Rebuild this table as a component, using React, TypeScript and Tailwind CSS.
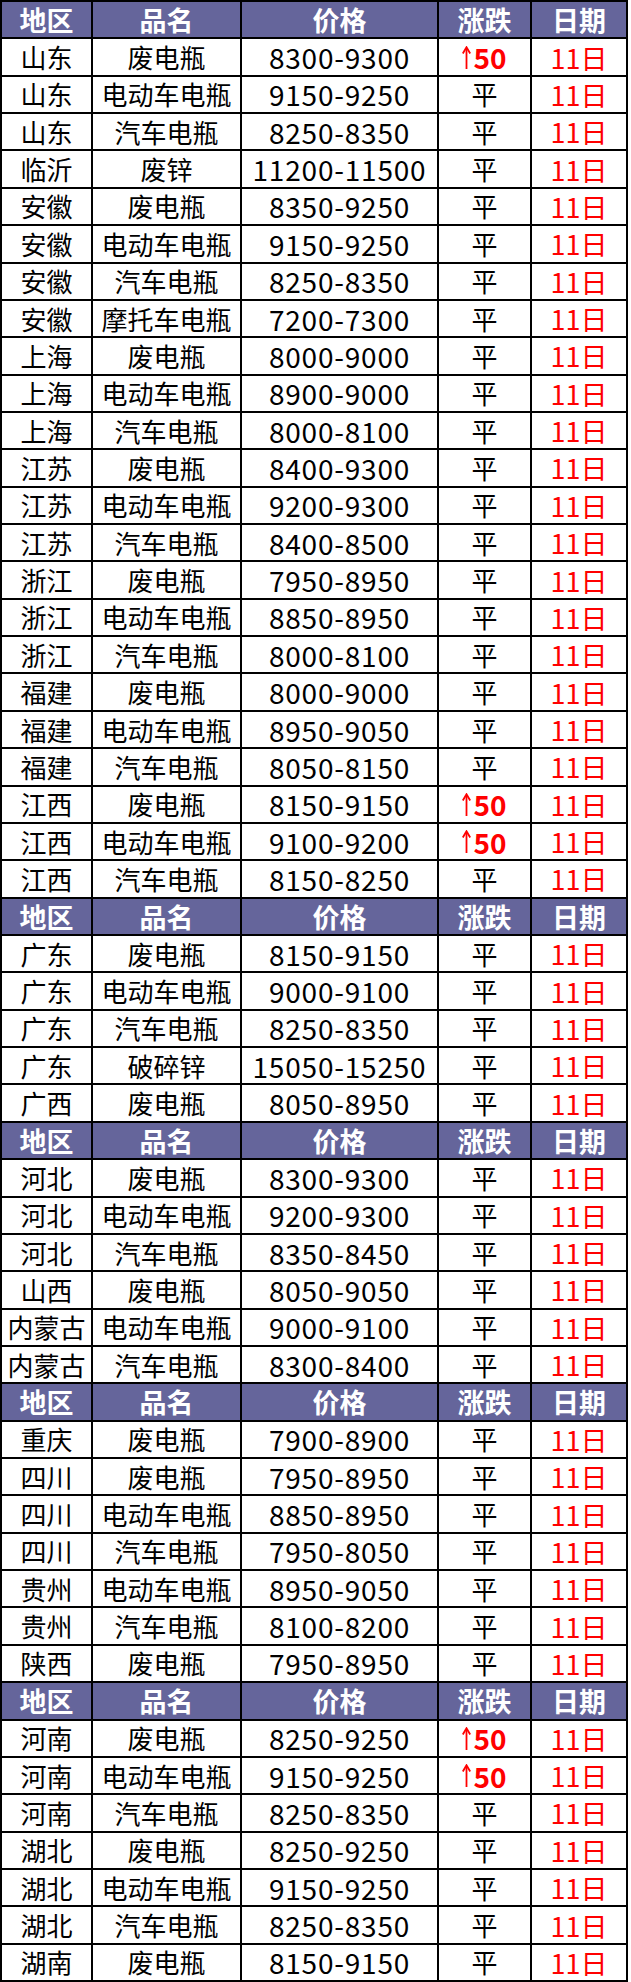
import React from 'react'

type Row = { area: string; name: string; price: string; change: string }

const sections: Row[][] = [
  [
    { area: '山东', name: '废电瓶', price: '8300-9300', change: '50' },
    { area: '山东', name: '电动车电瓶', price: '9150-9250', change: '平' },
    { area: '山东', name: '汽车电瓶', price: '8250-8350', change: '平' },
    { area: '临沂', name: '废锌', price: '11200-11500', change: '平' },
    { area: '安徽', name: '废电瓶', price: '8350-9250', change: '平' },
    { area: '安徽', name: '电动车电瓶', price: '9150-9250', change: '平' },
    { area: '安徽', name: '汽车电瓶', price: '8250-8350', change: '平' },
    { area: '安徽', name: '摩托车电瓶', price: '7200-7300', change: '平' },
    { area: '上海', name: '废电瓶', price: '8000-9000', change: '平' },
    { area: '上海', name: '电动车电瓶', price: '8900-9000', change: '平' },
    { area: '上海', name: '汽车电瓶', price: '8000-8100', change: '平' },
    { area: '江苏', name: '废电瓶', price: '8400-9300', change: '平' },
    { area: '江苏', name: '电动车电瓶', price: '9200-9300', change: '平' },
    { area: '江苏', name: '汽车电瓶', price: '8400-8500', change: '平' },
    { area: '浙江', name: '废电瓶', price: '7950-8950', change: '平' },
    { area: '浙江', name: '电动车电瓶', price: '8850-8950', change: '平' },
    { area: '浙江', name: '汽车电瓶', price: '8000-8100', change: '平' },
    { area: '福建', name: '废电瓶', price: '8000-9000', change: '平' },
    { area: '福建', name: '电动车电瓶', price: '8950-9050', change: '平' },
    { area: '福建', name: '汽车电瓶', price: '8050-8150', change: '平' },
    { area: '江西', name: '废电瓶', price: '8150-9150', change: '50' },
    { area: '江西', name: '电动车电瓶', price: '9100-9200', change: '50' },
    { area: '江西', name: '汽车电瓶', price: '8150-8250', change: '平' },
  ],
  [
    { area: '广东', name: '废电瓶', price: '8150-9150', change: '平' },
    { area: '广东', name: '电动车电瓶', price: '9000-9100', change: '平' },
    { area: '广东', name: '汽车电瓶', price: '8250-8350', change: '平' },
    { area: '广东', name: '破碎锌', price: '15050-15250', change: '平' },
    { area: '广西', name: '废电瓶', price: '8050-8950', change: '平' },
  ],
  [
    { area: '河北', name: '废电瓶', price: '8300-9300', change: '平' },
    { area: '河北', name: '电动车电瓶', price: '9200-9300', change: '平' },
    { area: '河北', name: '汽车电瓶', price: '8350-8450', change: '平' },
    { area: '山西', name: '废电瓶', price: '8050-9050', change: '平' },
    { area: '内蒙古', name: '电动车电瓶', price: '9000-9100', change: '平' },
    { area: '内蒙古', name: '汽车电瓶', price: '8300-8400', change: '平' },
  ],
  [
    { area: '重庆', name: '废电瓶', price: '7900-8900', change: '平' },
    { area: '四川', name: '废电瓶', price: '7950-8950', change: '平' },
    { area: '四川', name: '电动车电瓶', price: '8850-8950', change: '平' },
    { area: '四川', name: '汽车电瓶', price: '7950-8050', change: '平' },
    { area: '贵州', name: '电动车电瓶', price: '8950-9050', change: '平' },
    { area: '贵州', name: '汽车电瓶', price: '8100-8200', change: '平' },
    { area: '陕西', name: '废电瓶', price: '7950-8950', change: '平' },
  ],
  [
    { area: '河南', name: '废电瓶', price: '8250-9250', change: '50' },
    { area: '河南', name: '电动车电瓶', price: '9150-9250', change: '50' },
    { area: '河南', name: '汽车电瓶', price: '8250-8350', change: '平' },
    { area: '湖北', name: '废电瓶', price: '8250-9250', change: '平' },
    { area: '湖北', name: '电动车电瓶', price: '9150-9250', change: '平' },
    { area: '湖北', name: '汽车电瓶', price: '8250-8350', change: '平' },
    { area: '湖南', name: '废电瓶', price: '8150-9150', change: '平' },
  ],
]

// 5 columns: 地区 / 品名 / 价格 / 涨跌 / 日期
const rowCls =
  'grid grid-cols-[91px_149px_197px_93px_96px] h-[37.36px] border-b-2 border-black'
const cell =
  'flex items-center justify-center border-r-2 border-black whitespace-nowrap leading-none'

const UpArrow = () => (
  <svg width="9" height="23" viewBox="0 0 9 23" className="mr-[2px]">
    <path d="M4.5 2.5V23" stroke="#ff0000" strokeWidth="1.8" fill="none" />
    <path d="M0.8 7.5L4.5 1.2L8.2 7.5" stroke="#ff0000" strokeWidth="1.8" fill="none" />
  </svg>
)

const HeaderRow = () => (
  <div className={`${rowCls} bg-[#65659b] text-[27px] text-white font-bold`}>
    <div className={cell}>地区</div>
    <div className={cell}>品名</div>
    <div className={cell}>价格</div>
    <div className={cell}>涨跌</div>
    <div className={cell}>日期</div>
  </div>
)

export default function App() {
  return (
    <div className="w-[631px] h-[1982px] bg-white font-['Noto_Sans_CJK_SC',sans-serif]">
      <div className="w-[628px] border-l-2 border-t-2 border-black text-[26px] text-black">
        {sections.map((rows, i) => (
          <React.Fragment key={i}>
            <HeaderRow />
            {rows.map((r, j) => (
              <div key={j} className={rowCls}>
                <div className={cell}>{r.area}</div>
                <div className={cell}>{r.name}</div>
                <div className={`${cell} text-[28px] tracking-[0.8px]`}>{r.price}</div>
                <div className={cell}>
                  {r.change === '平' ? (
                    '平'
                  ) : (
                    <span className="flex items-center text-[#ff0000]">
                      <UpArrow />
                      <span className="text-[28px] font-bold">{r.change}</span>
                    </span>
                  )}
                </div>
                <div className={`${cell} text-[27px] text-[#ff0000]`}>11日</div>
              </div>
            ))}
          </React.Fragment>
        ))}
      </div>
    </div>
  )
}
